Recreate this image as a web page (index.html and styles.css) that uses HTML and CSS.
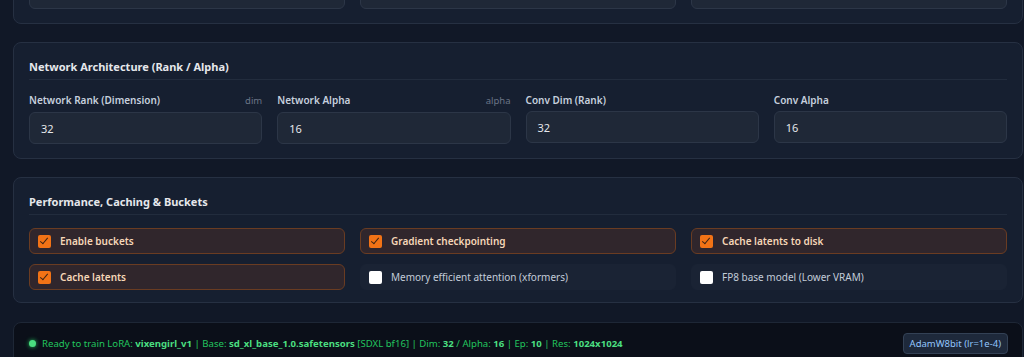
FILE: index.html
```html
<!DOCTYPE html>
<html lang="en">
<head>
    <meta charset="UTF-8">
    <meta name="viewport" content="width=device-width, initial-scale=1.0">
    <title>LoRA Trainer</title>
    <link rel="stylesheet" href="styles.css">
</head>
<body>
<div class="page">
    <div class="card card-cut">
        <div class="grid-3">
            <div class="input"></div>
            <div class="input"></div>
            <div class="input"></div>
        </div>
    </div>

    <div class="card card-fields">
        <h2 class="card-title">Network Architecture (Rank / Alpha)</h2>
        <div class="grid-4">
            <div class="field">
                <div class="field-label"><span>Network Rank (Dimension)</span><span class="hint">dim</span></div>
                <div class="input">32</div>
            </div>
            <div class="field">
                <div class="field-label"><span>Network Alpha</span><span class="hint">alpha</span></div>
                <div class="input">16</div>
            </div>
            <div class="field">
                <div class="field-label"><span>Conv Dim (Rank)</span></div>
                <div class="input">32</div>
            </div>
            <div class="field">
                <div class="field-label"><span>Conv Alpha</span></div>
                <div class="input">16</div>
            </div>
        </div>
    </div>

    <div class="card">
        <h2 class="card-title">Performance, Caching &amp; Buckets</h2>
        <div class="grid-3 checks">
            <label class="check on"><span class="box"></span>Enable buckets</label>
            <label class="check on"><span class="box"></span>Gradient checkpointing</label>
            <label class="check on"><span class="box"></span>Cache latents to disk</label>
            <label class="check on"><span class="box"></span>Cache latents</label>
            <label class="check"><span class="box"></span>Memory efficient attention (xformers)</label>
            <label class="check"><span class="box"></span>FP8 base model (Lower VRAM)</label>
        </div>
    </div>

    <div class="status">
        <div class="status-text">
            <span class="dot"></span><span>Ready to train LoRA: <b>vixengirl_v1</b> | Base: <b>sd_xl_base_1.0.safetensors</b> [SDXL bf16] | Dim: <b>32</b> / Alpha: <b>16</b> | Ep: <b>10</b> | Res: <b>1024x1024</b></span>
        </div>
        <span class="badge">AdamW8bit (lr=1e-4)</span>
    </div>
</div>
</body>
</html>
```

FILE: styles.css
```css
body {
    margin: 0;
    background-color: #111827;
    font-family: 'Noto Sans', 'Open Sans', sans-serif;
    color: #cbd5e1;
    overflow: hidden;
}

.page {
    padding: 0 1px 0 13px;
    display: flex;
    flex-direction: column;
    gap: 18px;
}

.card {
    background-color: #161f30;
    border: 1px solid #263042;
    border-radius: 8px;
    padding: 16px 15px 12px 15px;
}

.card-fields {
    padding-bottom: 14px;
}

.card-cut {
    margin-top: -38px;
    padding-top: 14px;
    padding-bottom: 14px;
}

.card-title {
    margin: 0 0 13px 0;
    padding-bottom: 5px;
    border-bottom: 1px solid #222c3d;
    font-size: 11px;
    line-height: 15px;
    font-weight: 700;
    color: #e5e7eb;
}

.grid-4 {
    display: grid;
    grid-template-columns: repeat(4, 1fr);
    gap: 15px;
}

.grid-3 {
    display: grid;
    grid-template-columns: repeat(3, 1fr);
    column-gap: 15px;
}

.field-label {
    display: flex;
    justify-content: space-between;
    align-items: baseline;
    font-size: 10px;
    line-height: 14px;
    font-weight: 600;
    color: #c6d0de;
    margin-bottom: 4px;
}

.hint {
    font-size: 9.5px;
    font-weight: 400;
    color: #6b7587;
}

.input {
    box-sizing: border-box;
    height: 32px;
    padding: 0 11px;
    display: flex;
    align-items: center;
    background-color: #1f2837;
    border: 1px solid #2c3647;
    border-radius: 6px;
    font-size: 11px;
    color: #e5e7eb;
}

.checks {
    row-gap: 10px;
}

.check {
    box-sizing: border-box;
    height: 26px;
    display: flex;
    align-items: center;
    gap: 9px;
    padding: 0 8px;
    background-color: #1a2334;
    border: 1px solid #1a2334;
    border-radius: 6px;
    font-size: 10px;
    color: #c3ccd9;
}

.check.on {
    background-color: #30262c;
    border-color: #6a3c22;
    color: #f6d7b8;
    font-weight: 600;
}

.box {
    width: 13px;
    height: 13px;
    border-radius: 2px;
    background-color: #ffffff;
    flex: 0 0 13px;
    position: relative;
}

.check.on .box {
    background-color: #f27316;
}

.check.on .box::after {
    content: "";
    position: absolute;
    left: 4px;
    top: 1px;
    width: 3px;
    height: 7px;
    border: solid #3b2416;
    border-width: 0 1.6px 1.6px 0;
    transform: rotate(40deg);
}

.status {
    margin-top: 1px;
    display: flex;
    justify-content: space-between;
    align-items: center;
    background-color: #0b0f19;
    border: 1px solid #1e2736;
    border-radius: 8px;
    padding: 10px 14px 10px 15px;
}

.status-text {
    display: flex;
    align-items: center;
    gap: 6px;
    font-size: 9.6px;
    color: #22c55e;
    white-space: nowrap;
}

.status-text b {
    color: #4ade80;
}

.dot {
    width: 7px;
    height: 7px;
    border-radius: 50%;
    background-color: #4ade80;
    box-shadow: 0 0 4px #22c55e;
}

.badge {
    padding: 3px 6px;
    background-color: #1e293b;
    border: 1px solid #334155;
    border-radius: 4px;
    font-size: 9.5px;
    color: #93c5fd;
}
```
